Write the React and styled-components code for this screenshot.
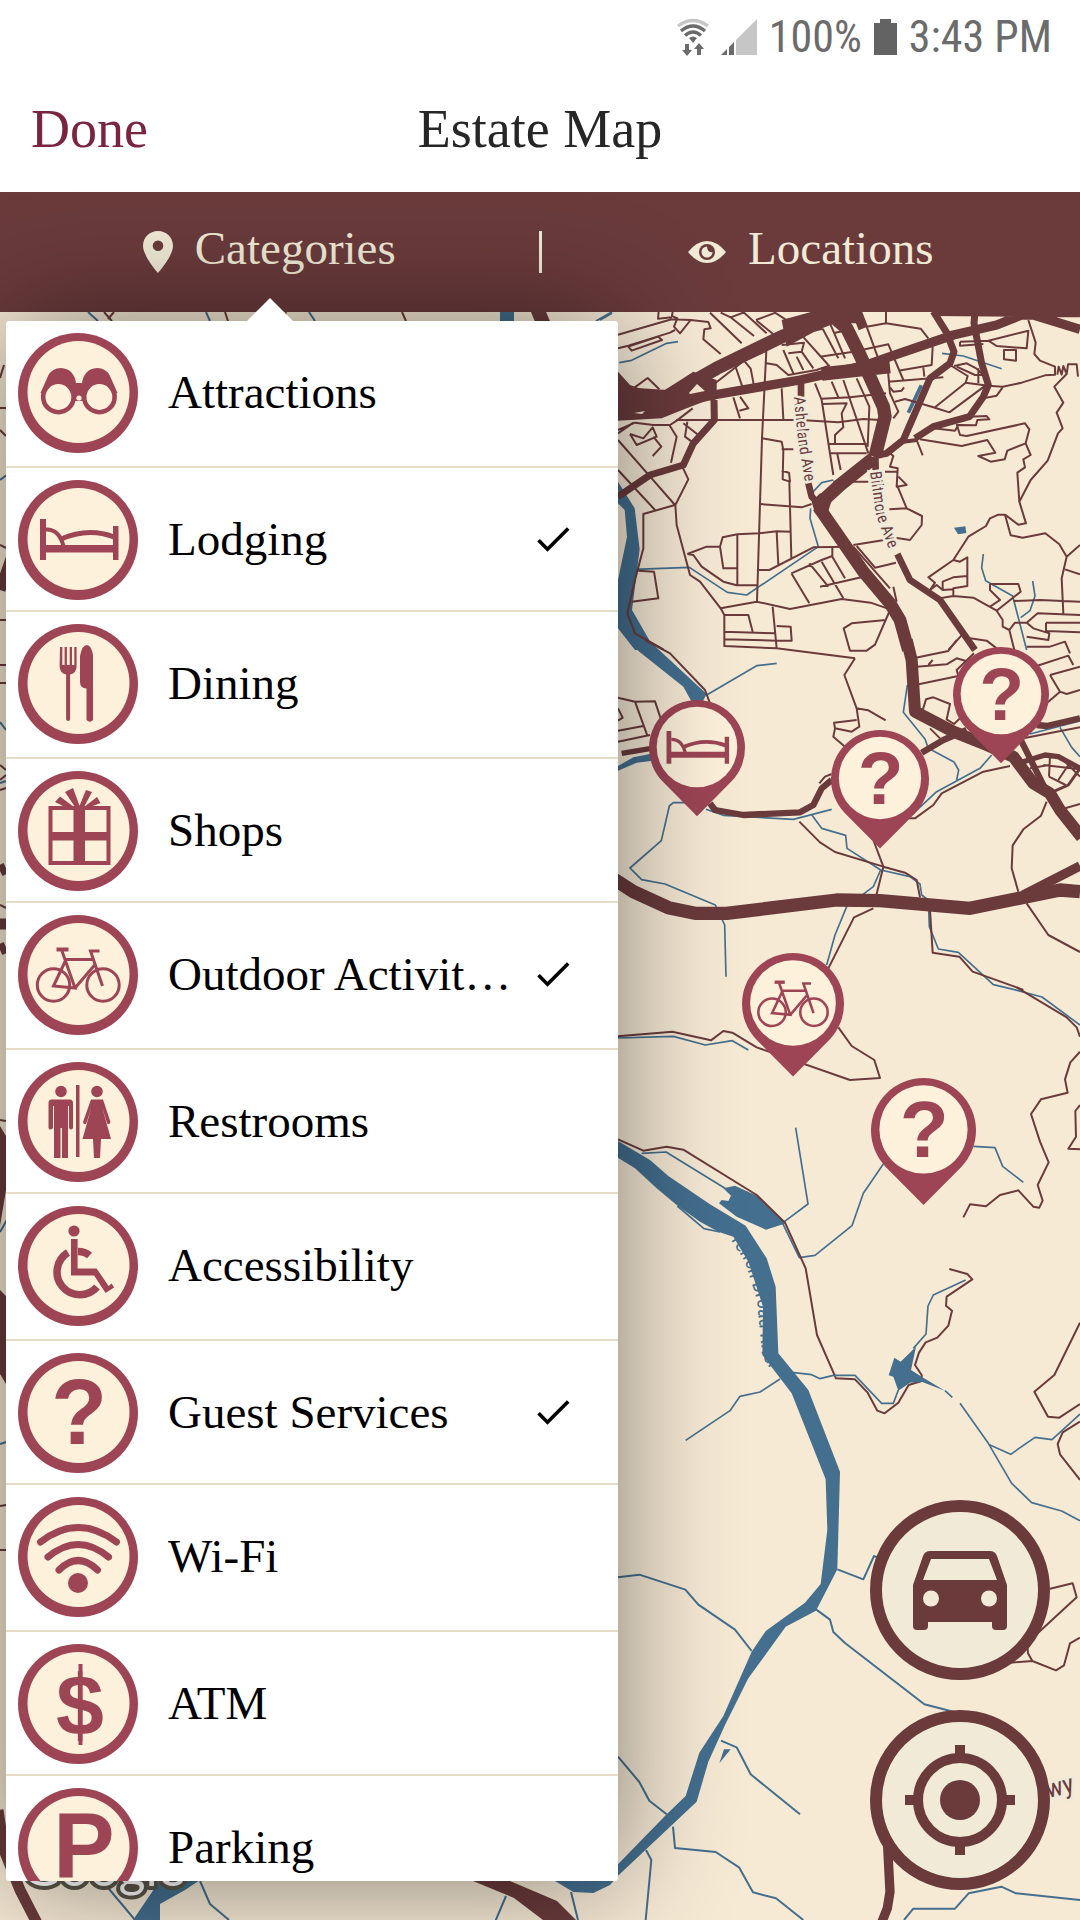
import { useState } from 'react'
import styled, { createGlobalStyle } from 'styled-components'

const GlobalStyle = createGlobalStyle`
  * {
    box-sizing: border-box;
  }

  body {
    margin: 0;
    background-color: #ffffff;
  }
`

const SERIF = "'Liberation Serif', 'Times New Roman', serif"
const SANS = "'Roboto Condensed', 'Liberation Sans Narrow', Roboto, sans-serif"
const BOLD_SANS = "'Liberation Sans', Arial, sans-serif"

const MAROON = '#6b3b3c'
const CRIMSON = '#9d4555'
const WATER = '#446f8f'
const CREAM = '#fdf1db'
const IVORY = '#f0ead6'

const Screen = styled.div`
  display: flex;
  flex-direction: column;
  min-height: 100vh;
  overflow: hidden;
  font-family: ${SERIF};
`

const StatusBar = styled.div`
  display: flex;
  align-items: center;
  justify-content: flex-end;
  gap: 12px;
  height: 72px;
  padding: 2px 28px 0 0;
  background-color: #ffffff;
  color: #6b6b6b;
  font-family: ${SANS};
  font-size: 44px;
`

const AppBar = styled.header`
  display: grid;
  grid-template-columns: 1fr auto 1fr;
  align-items: center;
  height: 120px;
  padding: 0 31px 6px;
  background-color: #ffffff;
`

const DoneButton = styled.button`
  justify-self: start;
  padding: 0;
  border: none;
  background: none;
  color: #7a2440;
  font-family: inherit;
  font-size: 54px;
`

const Title = styled.h1`
  margin: 0;
  color: #262626;
  font-size: 54px;
  font-weight: 400;
`

const TabBar = styled.nav`
  display: flex;
  align-items: center;
  height: 120px;
  background-color: ${MAROON};
`

const Tab = styled.button`
  display: flex;
  flex: 1;
  align-items: center;
  justify-content: center;
  gap: 22px;
  padding: 0;
  border: none;
  background: none;
  color: ${IVORY};
  font-family: inherit;
  font-size: 47px;
`

const TabLabel = styled.span`
  padding-bottom: 8px;
`

const TabDivider = styled.span`
  width: 3px;
  height: 42px;
  background-color: ${IVORY};
`

const MapArea = styled.main`
  position: relative;
  flex: 1;
  min-height: 600px;
  background-color: #f7ead5;
`

const MapCanvas = styled.svg`
  position: absolute;
  inset: 0;
  width: 100%;
  height: 100%;
`

const Popup = styled.div`
  position: absolute;
  top: 9px;
  bottom: 39px;
  left: 6px;
  width: 612px;
  max-width: calc(100% - 12px);
  border-radius: 3px;
  background-color: #ffffff;
  box-shadow: 0 0 120px rgba(0, 0, 0, 0.48);

  &::before {
    content: '';
    position: absolute;
    top: -23px;
    left: 240px;
    border: 24px solid transparent;
    border-top: none;
    border-bottom: 24px solid #ffffff;
  }
`

const CategoryList = styled.ul`
  height: 100%;
  margin: 0;
  padding: 0;
  overflow: hidden;
  border-radius: 3px;
  list-style: none;
`

const CategoryItem = styled.li`
  height: 144px;
  border-bottom: 2px solid #e4dcc4;

  &:nth-child(odd) {
    height: 147px;
  }
`

const CategoryRow = styled.label`
  display: flex;
  align-items: center;
  gap: 8px;
  padding: 12px 43px 0 12px;
`

const Badge = styled.svg`
  flex: none;
  width: 120px;
  height: 120px;
  margin-right: 22px;
`

const CategoryName = styled.span`
  flex: 1;
  min-width: 0;
  padding-bottom: 2px;
  overflow: hidden;
  color: #000000;
  font-size: 47px;
  text-overflow: ellipsis;
  white-space: nowrap;
`

const Tick = styled.input`
  appearance: none;
  flex: none;
  width: 44px;
  height: 44px;
  margin: 0 0 2px;
  clip-path: polygon(37.5% 67.4%, 20.1% 50%, 14.2% 55.9%, 37.5% 79.2%, 87.5% 29.2%, 81.6% 23.3%);

  &:checked {
    background-color: #000000;
  }
`

const MapControls = styled.div`
  position: absolute;
  right: 30px;
  bottom: 30px;
  display: flex;
  flex-direction: column;
  gap: 30px;
`

const RoundButton = styled.button`
  width: 180px;
  height: 180px;
  padding: 0;
  border: 12px solid ${MAROON};
  border-radius: 50%;
  background-color: ${IVORY};

  svg {
    display: block;
    width: 100%;
    height: 100%;
  }
`

const categories = [
  { name: 'Attractions', icon: 'binoculars' },
  { name: 'Lodging', icon: 'bed' },
  { name: 'Dining', icon: 'cutlery' },
  { name: 'Shops', icon: 'gift' },
  { name: 'Outdoor Activit…', icon: 'bike' },
  { name: 'Restrooms', icon: 'restrooms' },
  { name: 'Accessibility', icon: 'wheelchair' },
  { name: 'Guest Services', icon: 'question' },
  { name: 'Wi-Fi', icon: 'wifi' },
  { name: 'ATM', icon: 'dollar' },
  { name: 'Parking', icon: 'parking' },
]

const pins = [
  { icon: 'question', x: 953, y: 647, size: 96 },
  { icon: 'question', x: 831, y: 730, size: 98 },
  { icon: 'bed', x: 649, y: 700, size: 96 },
  { icon: 'bike', x: 742, y: 953, size: 102 },
  { icon: 'question', x: 871, y: 1078, size: 105 },
]

// every glyph is drawn on a 120 x 120 grid
const glyphs = {
  binoculars: (
    <>
      <path d="M22.500 60L30 43Q34 35 43 35Q56 36 58 50H64Q66 36 79 35Q88 35 92 43L99.500 60L66 68H56Z" />
      <circle cx="40.4" cy="64" r="15.2" fill={CREAM} stroke={CRIMSON} strokeWidth="4.6" />
      <circle cx="81.4" cy="64" r="15.2" fill={CREAM} stroke={CRIMSON} strokeWidth="4.6" />
      <circle cx="61" cy="65" r="2.6" fill={CREAM} />
    </>
  ),
  bed: (
    <>
      <path d="M22 39h6v26h67v-19h5.500v34h-5.500v-7.500h-67v7.500h-6z" />
      <path d="M28 49.500Q41 49 45.500 66" fill="none" stroke={CRIMSON} strokeWidth="4" />
      <path d="M42 59.500Q70 47 96 57" fill="none" stroke={CRIMSON} strokeWidth="5" />
    </>
  ),
  cutlery: (
    <>
      <path d="M42 23h2.300v18h2.300v-18h2.300v18h2.800v-18h2.300v18h2.300v-18h2.300v19q0 7-6.500 8.500v45q-2 3-4 0v-45q-6.500-1.500-6.500-8.500z" />
      <path d="M62 32Q64 21 69 21Q74 22 75 32V96Q72 99.500 68.500 96V64.500Q62 64 62 58Z" />
    </>
  ),
  gift: (
    <>
      <path
        d="M30.500 35H92.500V94H30.500ZM34.500 39V61H55.500V39ZM67 39V61H88.500V39ZM34.500 69.500V90H55.500V69.500ZM67 69.500V90H88.500V69.500Z"
        fillRule="evenodd"
      />
      <path d="M47 21L55 17L62 36H57ZM37 31L42 25.500L56 36H47ZM68 19L74 21L66 36H61ZM79 26L82.500 32L72 36H66Z" />
    </>
  ),
  bike: (
    <g fill="none" stroke={CRIMSON} strokeWidth="3">
      <circle cx="35.500" cy="70" r="16.200" />
      <circle cx="85" cy="70" r="16.200" />
      <path d="M44 36L57 73L35.500 71L48 44.500H75M57 73L77.500 49M81.500 36H72.500L84.500 71" />
      <path d="M38.500 34.500H50.500" strokeWidth="4" />
    </g>
  ),
  restrooms: (
    <>
      <circle cx="43" cy="29.500" r="5.800" />
      <circle cx="79" cy="29.500" r="5.800" />
      <path d="M33 37.500H52.500Q55 38 55 41V66Q53 69 51 66V44H50V96H44V66H42.500V96H36V44H35V66Q32 69 30.500 66V41Q30.500 38 33 37.500Z" />
      <path d="M58 23h3.500v72h-3.500z" />
      <path d="M73 37.500H85L92.500 60Q91 64 89 61L84 45L93 77H83L82 96H76L75 77H64.500L73.500 45L68.500 61Q66 64 65 60Z" />
    </>
  ),
  wheelchair: (
    <>
      <circle cx="56" cy="25" r="5.600" />
      <path d="M53 33h6.600v29.500h19l12 17.500 3-2.500 2.500 4-8.500 5.500-11.500-17.500h-23.100z" />
      <path d="M50 46.500A22.800 22.800 0 1 0 79 81M60 45.500Q67 45.500 71.500 49.500" fill="none" stroke={CRIMSON} strokeWidth="7.5" />
    </>
  ),
  question: (
    <text x="61" y="91" fontSize="92" fontWeight="700" fontFamily={BOLD_SANS} textAnchor="middle">
      ?
    </text>
  ),
  wifi: (
    <>
      <circle cx="60" cy="86" r="10" />
      <path
        d="M22.500 45Q60 16 98.500 45M30 60Q60 35 90.500 60M41 73Q60 54 79.500 73"
        fill="none"
        stroke={CRIMSON}
        strokeWidth="7"
        strokeLinecap="round"
      />
    </>
  ),
  dollar: (
    <>
      <text x="62" y="91" fontSize="86" fontWeight="700" fontFamily={BOLD_SANS} textAnchor="middle">
        $
      </text>
      <path d="M60.500 20h4v81h-4z" />
    </>
  ),
  parking: (
    <text x="66" y="90" fontSize="92" fontWeight="700" fontFamily={BOLD_SANS} textAnchor="middle">
      P
    </text>
  ),
}

// map pieces: x and y are where the piece starts, paths are in thirds of a pixel
const mapPieces = [
  {
    x: 600,
    y: 300,
    water: [
      [5, 'M0 60L36 40M58 188L95 181L200 130L234 125M1026 160L1090 168L1205 206M635 580L665 548L700 540M632 625L630 655L655 740L440 885L382 877L268 802L104 808M1150 762L1145 803L1157 842L1238 888L1280 1050M1298 843L1305 888L1290 932L1262 953'],
      [11, 'M964 256L925 338'],
    ],
    waterShapes: ['M1062 683L1096 679L1099 699L1074 703Z', 'M54 545L104 625L119 748L96 930L165 1050H105L54 985V840L81 710L74 630L54 610Z'],
    roads: [
      [6, 'M54 104L215 58L272 60L240 100L222 80L232 55L216 48L218 34M176 34L174 56L216 52M54 145L85 137L210 98L225 90M85 140L175 110L186 120L95 152L85 140M272 60L325 66L332 85L313 88L310 118L362 162M330 38L425 130M390 50L462 108M430 36L500 100M470 62L522 104M525 38L575 70M362 38L392 52L435 36M468 60L527 38'],
      [6, 'M104 262L143 234L178 268M330 262L432 182L500 152M408 204L432 275M432 182L452 206L464 268M499 152L486 415L471 905M500 190L530 195L565 225L650 210L690 196M545 265L550 357M400 292L420 355M420 290L445 325L418 332M228 360L600 360L715 367L790 357L838 360'],
      [6, 'M600 100L685 195M550 150L580 220M565 160L605 155L640 205M605 155L612 128L545 135M590 170L610 210M660 170L760 155L865 133L910 240M668 86L715 175M690 70L735 175M668 86L600 102M705 98L745 90M800 80L858 70L962 86L985 115M858 36V70M800 80L840 190M998 140L995 195L895 212M970 203L973 230M863 203L870 280L895 335L880 355M865 245L1030 232'],
      [6, 'M645 250L665 300L700 525M665 296L750 292L858 280M695 245L715 292M730 240L805 460M770 235L808 320L803 440M668 312L740 310L725 340L730 382L705 405V430M685 432H800M690 460H800M712 462L722 510M870 262L880 275L905 272L912 262M885 305L915 297L1000 322L1048 337L1165 250'],
      [6, 'M700 545H805M870 460L880 468L870 500L893 505L890 560L920 555L895 530M893 560L920 625L868 628M920 625L966 648L965 675L930 720L890 714L760 735M855 515H893'],
      [6, 'M1080 125L1165 122L1285 92L1280 145L1190 138L1165 122M1080 125V137L1150 132M1212 150V178L1248 182V150ZM1285 60L1307 128L1303 162L1320 182L1365 200V224L1335 226L1265 248L1208 260L1165 257L1097 248M1372 224L1376 200L1385 224L1390 198L1400 222L1404 193H1430L1434 230M1400 222L1363 260L1390 308L1370 338L1388 385L1374 400L1343 482L1292 540L1258 605L1278 670L1255 674L1215 644'],
      [6, 'M1050 195L1103 228L1097 248L1005 322M1062 198L1100 190L1130 206L1150 225H1125L1070 200M1135 205V250M1208 262L1190 287L1150 295M1070 372L1080 405L1100 408L1275 370L1288 388L1277 430L1292 465L1270 478L1275 502L1252 518L1258 605M960 418L1085 438L1162 420L1186 458L1135 468L1172 485L1214 478L1222 452L1277 430M950 420L968 466M1000 385L1065 392L1075 375L1128 376L1132 360L1168 358L1160 348L1105 350'],
      [6, 'M54 390L105 368L160 375L210 375L230 362L278 325M90 402L110 435L170 410L158 382L130 415L90 402M160 410L184 440L158 468M54 400L100 368M208 375L230 410L213 488M54 420L155 535L225 615L130 642V745L105 840L82 940L105 1000L190 1048M54 510L165 630M250 370L295 405M262 365L255 410L275 425M247 500L265 538L226 615L230 675L270 825L300 845L362 925L470 905L570 927L725 897L812 908L870 928'],
      [6, 'M486 415L545 425L550 450L548 538L570 545L567 518L545 512M545 448H580M568 545L574 775M480 612L605 622L635 612M478 700L530 694L573 695M262 762L320 740L360 740L368 712L412 703L478 700M412 703V855M360 740L370 805H410M530 694L535 795M262 762L280 765L305 800L370 845L410 856H472M476 810H508L640 742L745 740M574 820L665 780L697 768V742M574 820L628 910M628 790L685 860M665 785L730 895M660 860L800 828M697 770L735 835M95 905L175 895L162 815L115 812'],
      [6, 'M362 925L373 945V1038L530 1045L765 1075M373 945L445 945L458 995M373 995L528 1000M373 1018L530 1022M518 920L530 1045M530 978L572 980L575 1022L530 1022M868 935L857 960L755 970L731 985L750 1052L800 1052L825 1034L857 960M760 740L870 865M770 738L825 803L888 788M880 860L890 905'],
      [6, 'M1215 644H1195L1170 655L1158 678L1105 710L1060 780L985 832L1005 848L990 870L1010 855L1028 870V845L1060 832L1102 828M1060 780L1080 785L1102 772V858L1060 865V888M1028 870L1060 868M1215 644L1232 706L1268 713L1336 700L1378 733L1400 770L1385 835L1390 940M1400 770L1440 735M1395 808L1440 823M1170 852H1255L1262 875L1190 932L1208 960V980L1228 990L1243 1050M1170 852V870L1200 900L1170 920M1240 903L1320 900L1440 905M1280 968H1245L1228 990M1280 968L1313 940L1440 945M1020 895L1060 888L1120 893L1190 932M1338 968H1440M1338 968V993L1440 997M1280 968L1300 985L1348 1000L1345 1020L1280 1010M1045 1050L1090 1000M1110 1015L1160 1022L1190 1045'],
      [12, 'M950 420L910 425'],
      [21, 'M1000 34L1040 98L1062 155L1050 190L990 235L910 420L860 460L820 468M1125 34L1122 70L1145 190L1165 255L1150 290L1108 350L1000 380L945 415M342 300L343 360L280 430L250 495L150 525L54 590M280 250L330 265L342 300'],
      [20, 'M603 250V290M624 545L635 590L655 610M826 470L827 510M892 762L930 840L1020 900L1125 1050'],
      [28, 'M54 330L180 320L340 285L600 240L800 195L870 170L1060 105L1190 75L1265 45L1300 45L1440 88M1000 34L1440 38'],
      [40, 'M54 280L200 290L350 205L545 110L700 50M665 222L870 200M700 50L740 85L780 165L850 320L855 350L825 470M820 475L720 555L660 610'],
      [30, 'M770 34L790 85'],
      [38, 'M655 620L790 815L870 910L900 960L925 1050'],
    ],
    roadShapes: ['M54 215L90 255L140 272L195 270L280 215L350 240V290L260 325L185 355L54 362Z', 'M635 605L660 580L700 585L680 650L645 640Z', 'M545 60L640 34H780V70L690 70L560 140Z'],
  },
  {
    x: 600,
    y: 640,
    water: [
      [5, 'M320 165L470 77L530 70M262 488H220L208 498L184 602L90 684L125 719L195 732L346 795L374 855L378 1010M318 508L370 526L580 538L635 524L695 508M635 524L665 565L737 586L741 625L842 690L930 710L960 732L965 765L985 780L988 860L1015 927L1075 937L1180 1034L1240 1048M842 690L820 740L740 800L705 885L680 975M922 135L910 217L975 297L985 325L1062 366L1076 390L1070 420M940 520L1010 455L1140 385L1175 345M1290 282L1440 243M1380 262L1415 322L1440 350'],
    ],
    waterShapes: ['M84 0H145L320 162L300 200L275 185L250 140L105 25Z', 'M54 378L100 352L160 340V362L110 368L54 392Z'],
    roads: [
      [6, 'M135 0L210 40L315 150L330 190M54 173L105 185L165 184L182 235M105 185L142 287M54 272L130 258M54 305L150 285M54 205L68 233L54 242M765 55L733 105L770 205L778 260L755 275L705 265L700 290L735 320M768 205L805 211L857 241M770 240L702 248L705 265M598 545L660 607L705 636L850 680L915 698L950 720L960 772M820 600L850 680L828 770M820 805L762 832L685 985M990 810L998 938L1078 950L1118 995L1250 1042L1270 1050M1340 485L1323 527L1270 568L1238 616L1235 685L1255 755M1280 790L1345 885L1440 936M920 535H945L1000 495L1025 460L1150 395L1230 378M1270 295L1440 262M695 402L675 410L658 430'],
      [6, 'M940 55L1045 33L1070 0M950 80L1040 73L1070 55L1098 63L1122 40M985 75L998 60M945 135L1075 108L1070 90L1098 63M965 220L978 178L1000 172L1050 192L1040 238L1062 252L1080 235M990 265L1020 295M1310 78L1405 47L1420 75M1340 190L1380 155L1400 162L1440 150M1350 105L1380 155M1350 105L1440 80M1280 20H1350L1395 5L1410 40'],
      [6, 'M1350 350L1347 410M1330 375L1440 388M1375 345L1440 410M1405 375L1375 420M1347 410L1397 435M1290 385L1347 375M1395 505L1440 492'],
      [16, 'M65 340L150 326M1255 370L1335 345L1375 350L1440 385'],
      [9, 'M1440 385L1405 435L1360 455'],
      [19, 'M330 490L345 510L430 525L600 517L640 495L665 445L695 420M965 338L1030 300L1100 270M1310 255L1340 258L1440 235M1260 295L1350 475'],
      [28, 'M1270 765L1440 678'],
      [36, 'M920 0L935 60L945 215L1060 275L1160 315L1240 350L1300 430L1350 460L1380 510L1445 592'],
      [40, 'M0 690L100 755L205 803L285 820H380L480 808L710 780L840 782L1110 805L1380 750L1440 755'],
    ],
  },
  {
    x: 600,
    y: 940,
    water: [
      [5, 'M54 294L220 289L316 315L397 302L445 330M587 563L624 792L553 845M125 640L198 636L375 745M232 798L312 866L360 876M548 850L598 953L645 946L756 857L790 760L850 672M1120 619L1185 623L1208 679L1270 727M1240 148L1326 171L1440 255'],
    ],
    waterShapes: [
      'M0 580L54 603L150 660L205 708L330 793L437 857L500 955L527 1040L535 1240L625 1350L720 1595L712 1888L648 2012L557 2060L445 2215L375 2355L325 2465L290 2585L54 2807L30 2835L-20 2859L-80 2856L-135 2823L54 2773L200 2623L257 2568L298 2438L370 2328L455 2135L498 2072L615 1988L662 1932L682 1770L677 1618L575 1360L487 1245L489 1100L445 965L400 890L355 875L300 845L230 795L170 745L105 685L0 620Z',
      'M370 745L405 737L472 768L558 850L498 869L410 830L357 790L365 780L385 783L393 767Z',
    ],
    roads: [
      [6, 'M54 289L217 275L333 301L370 273L397 278L470 322L750 420L840 414L823 360L755 318L715 262M54 598L130 632L200 620L250 629L470 765L555 848L617 985L651 1185L708 1315L765 1318L803 1358L832 1412L854 1420L895 1388L926 1335L965 1323V1305L945 1275L957 1238L977 1207L1012 1193L1045 1157L1056 1112L1038 1097L1040 1070L1117 1018L1102 1002L1048 987M1090 832L1110 793L1158 799L1200 765L1255 751L1300 800L1318 803L1328 782L1313 735L1346 667L1320 605L1293 522L1323 478L1403 458L1395 418L1411 367L1440 335M1250 142L1400 232L1430 262L1440 290M1440 495L1426 513L1428 590L1405 626L1440 628'],
    ],
  },
  {
    x: 600,
    y: 1220,
    water: [
      [5, 'M575 457L635 464L660 476L700 466H765L845 550H880L895 510M540 477L480 516L420 529L390 572L257 661M1097 180L1000 225L984 258L978 342L940 385M1035 512L1057 532M1080 550L1165 670L1235 790L1295 848L1385 873L1440 902M1165 673L1232 703L1305 652L1356 659L1440 582'],
    ],
    waterShapes: ['M948 380L902 425L883 413L866 466L880 470L895 512L930 488L965 485L1035 512L965 470L933 450Z'],
    roads: [[6, 'M1440 308L1363 465L1303 515L1344 590L1378 593L1440 552M1440 605L1388 637L1373 672L1380 703L1440 780']],
  },
  {
    x: 600,
    y: 1480,
    water: [
      [6, 'M54 292L118 284L256 329L295 374L405 449L455 513M712 268L790 298L822 228L840 235M648 388L690 419L700 456L735 489L973 673L1060 695M54 830L118 906L148 962L200 1003M363 782L410 802L452 883L600 1003M219 1040L225 1104L347 1116L417 1162L459 1237L528 1255L610 1320M138 1110L154 1140L137 1320M912 1320L940 1286H1065L1106 1240L1204 1220L1248 1240L1440 1260'],
    ],
    waterShapes: ['M372 808H392L358 850Z'],
    roads: [
      [6, 'M1350 326L1418 310L1430 352L1300 472L1282 497L1284 520L1297 543L1230 548M1297 543L1368 571L1392 556L1410 490L1440 473'],
      [28, 'M862 1080L870 1235L862 1285L846 1325'],
    ],
  },
]

// the strips that show around the category list, in whole pixels
const edgeRoads = [
  [2, 'M104 312L112 321M114 312L108 319M225 312L228 321M286 312L283 319M402 312L406 321M0 378L4 365M0 408H7M0 430L6 436M0 545L6 548M0 620H6M0 665H6M0 683H6M0 765L6 770M0 780L6 775M0 790L6 788M0 905L6 908M0 1120L6 1121M0 1506L6 1505M0 1550H6'],
  [11, 'M0 590L12 556M0 871L6 868M0 924H6M0 950L6 947M-2 1810L4 1850L20 1890L38 1925'],
  [14, 'M536 306L544 325'],
]

const edgeWater = [
  [2, 'M88 312L98 321M206 312L210 321M309 312L315 321M612 312L596 321M0 480L8 474M0 722L6 730M0 783L6 781M0 1232L8 1218M0 1444L6 1442M104 1883L135 1920M200 1881L210 1904L229 1920M506 1896L495 1922M571 1892L578 1920'],
  [14, 'M507 312V325'],
]

function Lines({ items, color }) {
  return items.map(([width, d]) => (
    <path key={d} d={d} fill="none" stroke={color} strokeWidth={width} strokeLinejoin="round" />
  ))
}

function Shapes({ items = [], color }) {
  return items.map((d) => <path key={d} d={d} fill={color} />)
}

function Pin({ icon, x, y, size }) {
  return (
    <g transform={`translate(${x} ${y}) scale(${size / 100})`}>
      <path d="M50 121L14 84.700A50 50 0 1 1 86 84.700Z" fill={CRIMSON} />
      <circle cx="50" cy="49" r="42" fill={CREAM} />
      <g transform="scale(0.83)" fill={CRIMSON}>
        {glyphs[icon]}
      </g>
    </g>
  )
}

function EstateMap() {
  return (
    <MapCanvas viewBox="0 312 1080 1608" preserveAspectRatio="xMidYMid slice" role="img" aria-label="Map of the estate">
      {mapPieces.map(({ x, y, water, waterShapes, roads, roadShapes }) => (
        <g key={y} transform={`translate(${x} ${y}) scale(${1 / 3})`}>
          <Lines items={water} color={WATER} />
          <Shapes items={waterShapes} color={WATER} />
          <Lines items={roads} color={MAROON} />
          <Shapes items={roadShapes} color={MAROON} />
        </g>
      ))}
      <Lines items={edgeWater} color={WATER} />
      <Lines items={edgeRoads} color={MAROON} />
      <path d="M133 1920L150 1895L160 1880H200L185 1890L160 1904V1920Z" fill={WATER} />
      <path d="M473 1881H510L557 1901L576 1920H543L514 1898Z" fill={MAROON} />
      <path d="M0 1290L6 1296V1384L0 1374ZM0 1126L6 1136V1190L0 1226Z" fill={MAROON} />
      <path d="M689 393L697 384L705 391L690 394ZM634 413L645 411L642 414Z" fill="#f7ead5" />

      <path id="asheland" d="M794 397L798 440L806 488" fill="none" />
      <path id="biltmore" d="M870 472L876 515L894 562" fill="none" />
      <path id="river" d="M726 1232L745 1262L757 1300L762 1356L790 1400" fill="none" />
      <g fontFamily={SANS} fontSize="16" fill={MAROON} stroke="#eeeada" strokeWidth="5" paintOrder="stroke">
        <text>
          <textPath href="#asheland">Asheland Ave</textPath>
        </text>
        <text>
          <textPath href="#biltmore">Biltmore Ave</textPath>
        </text>
        <text x="1037" y="1801" fontSize="26" transform="rotate(-14 1037 1801)">
          kwy
        </text>
      </g>
      <text fontFamily={SANS} fontSize="20" fill={WATER}>
        <textPath href="#river">French Broad River</textPath>
      </text>

      <text
        x="22"
        y="1886"
        fontFamily="Lato, sans-serif"
        fontSize="52"
        fill="#ffffff"
        stroke="#5c5648"
        strokeWidth="8"
        strokeLinejoin="round"
        paintOrder="stroke"
      >
        Google
      </text>

      {pins.map((pin) => (
        <Pin key={pin.x} {...pin} />
      ))}
    </MapCanvas>
  )
}

function StatusIcons() {
  return (
    <>
      <svg width="32" height="38" viewBox="0 0 32 38">
        <g fill="none" strokeWidth="3.200">
          <path d="M1 8Q16-3 31 8" stroke="#c6c6c6" />
          <path d="M4 13Q16 3 28 13M8 17.500Q16 10.500 24 17.500" stroke="#6b6b6b" />
        </g>
        <path d="M12 20Q16 17 20 20L16 25ZM8 26h4v6h3l-5 6-5-6h3zM20 37h4v-6h3l-5-6-5 6h3z" fill="#6b6b6b" />
      </svg>
      <svg width="36" height="36" viewBox="0 0 36 36">
        <path d="M36 0V36H15V21Z" fill="#c6c6c6" />
        <path d="M13 23V36H8V28ZM6 30V36H0Z" fill="#6b6b6b" />
      </svg>
    </>
  )
}

function App() {
  const [selected, setSelected] = useState(['Lodging', 'Outdoor Activit…', 'Guest Services'])

  const toggle = (name) => {
    setSelected((prev) => (prev.includes(name) ? prev.filter((item) => item !== name) : [...prev, name]))
  }

  return (
    <Screen>
      <GlobalStyle />
      <StatusBar>
        <StatusIcons />
        <span>100%</span>
        <svg width="23" height="36" viewBox="0 0 23 36">
          <path d="M6 0H17V4H23V36H0V4H6Z" fill="#636363" />
        </svg>
        <span>3:43 PM</span>
      </StatusBar>
      <AppBar>
        <DoneButton type="button">Done</DoneButton>
        <Title>Estate Map</Title>
      </AppBar>
      <TabBar>
        <Tab type="button">
          <svg width="30" height="42" viewBox="0 0 30 42">
            <path
              d="M15 0C6.500 0 0 6.500 0 15C0 25 15 42 15 42S30 25 30 15C30 6.500 23.500 0 15 0ZM15 9.500A5.300 5.300 0 1 1 15 20.100A5.300 5.300 0 1 1 15 9.500Z"
              fill={IVORY}
            />
          </svg>
          <TabLabel>Categories</TabLabel>
        </Tab>
        <TabDivider />
        <Tab type="button">
          <svg width="38" height="24" viewBox="0 0 38 24">
            <path d="M0 12Q9 1 19 1T38 12Q29 23 19 23T0 12Z" fill={IVORY} />
            <circle cx="19" cy="12" r="8" fill={MAROON} />
            <path d="M19 6.500A5.500 5.500 0 1 0 24.500 12Q19.500 13 19 6.500Z" fill={IVORY} />
          </svg>
          <TabLabel>Locations</TabLabel>
        </Tab>
      </TabBar>
      <MapArea>
        <EstateMap />
        <MapControls>
          <RoundButton type="button" aria-label="Directions">
            <svg viewBox="12 12 156 156">
              <path
                d="M60 51H120Q125 51 127 56L137 85V126Q137 130 133 130H126Q122 130 122 126V122H58V126Q58 130 54 130H47Q43 130 43 126V85L53 56Q55 51 60 51ZM61 59L53 80H127L119 59Z"
                fill={MAROON}
                fillRule="evenodd"
              />
              <circle cx="61" cy="98.500" r="8" fill={IVORY} />
              <circle cx="119" cy="98.500" r="8" fill={IVORY} />
            </svg>
          </RoundButton>
          <RoundButton type="button" aria-label="My location">
            <svg viewBox="12 12 156 156">
              <circle cx="90" cy="90" r="42" fill="none" stroke={MAROON} strokeWidth="10" />
              <circle cx="90" cy="90" r="20" fill={MAROON} />
              <path d="M90 35V46M90 134V145M35 90H46M134 90H145" stroke={MAROON} strokeWidth="10" />
            </svg>
          </RoundButton>
        </MapControls>
        <Popup>
          <CategoryList>
            {categories.map(({ name, icon }) => (
              <CategoryItem key={name}>
                <CategoryRow>
                  <Badge viewBox="0 0 120 120" fill={CRIMSON} aria-hidden="true">
                    <circle cx="60" cy="60" r="60" />
                    <circle cx="60.500" cy="59" r="51" fill={CREAM} />
                    {glyphs[icon]}
                  </Badge>
                  <CategoryName>{name}</CategoryName>
                  <Tick type="checkbox" checked={selected.includes(name)} onChange={() => toggle(name)} />
                </CategoryRow>
              </CategoryItem>
            ))}
          </CategoryList>
        </Popup>
      </MapArea>
    </Screen>
  )
}

export default App
